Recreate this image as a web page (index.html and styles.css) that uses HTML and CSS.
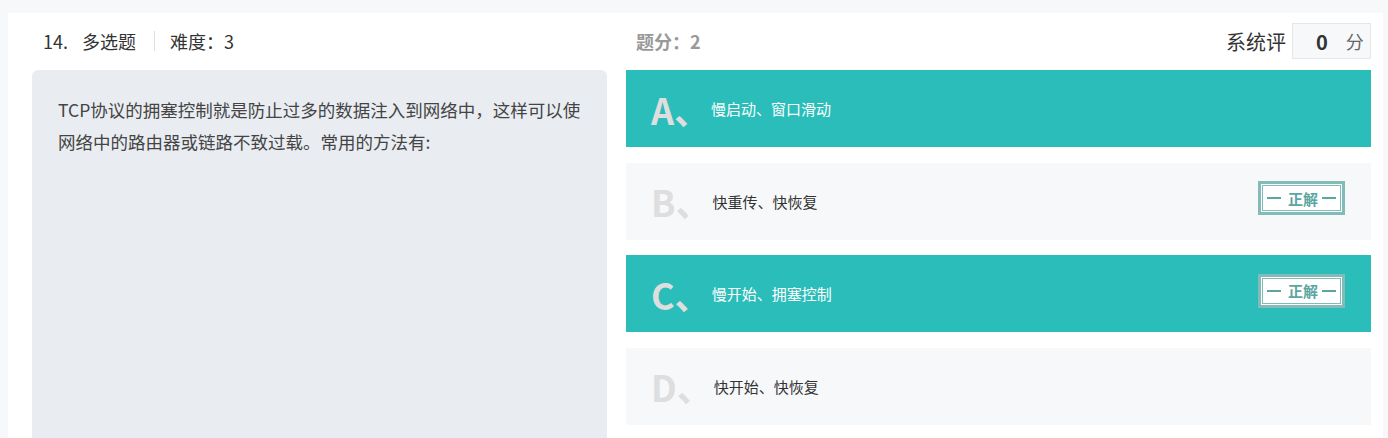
FILE: index.html
```html
<!DOCTYPE html>
<html lang="zh-CN">
<head>
<meta charset="utf-8">
<link rel="stylesheet" href="styles.css">
</head>
<body>
<div class="card">
  <div class="header">
    <div class="meta">
      <span class="num">14.</span>
      <span class="type">多选题</span>
      <span class="sep"></span>
      <span class="diff">难度：3</span>
    </div>
    <div class="meta-right">
      <span class="points">题分：2</span>
      <div class="score">
        <span class="score-label">系统评</span>
        <div class="score-box"><span class="score-val">0</span><span class="score-unit">分</span></div>
      </div>
    </div>
  </div>
  <div class="body">
    <div class="question">TCP协议的拥塞控制就是防止过多的数据注入到网络中，这样可以使网络中的路由器或链路不致过载。常用的方法有:</div>
    <div class="options">
      <div class="option selected">
        <span class="letter">A、</span><span class="text">慢启动、窗口滑动</span>
      </div>
      <div class="option">
        <span class="letter">B、</span><span class="text">快重传、快恢复</span>
        <span class="badge"><span class="badge-inner"><span class="dash dash-l"></span>正解<span class="dash dash-r"></span></span></span>
      </div>
      <div class="option selected">
        <span class="letter">C、</span><span class="text">慢开始、拥塞控制</span>
        <span class="badge"><span class="badge-inner"><span class="dash dash-l"></span>正解<span class="dash dash-r"></span></span></span>
      </div>
      <div class="option">
        <span class="letter">D、</span><span class="text">快开始、快恢复</span>
      </div>
    </div>
  </div>
</div>
</body>
</html>
```

FILE: styles.css
```css
html, body {
  margin: 0;
  height: 438px;
  overflow: hidden;
}
body {
  background: #f7f8fa;
  padding: 13px 5px 0 8px;
  box-sizing: border-box;
  font-family: "Noto Sans CJK SC", "Noto Sans", sans-serif;
  color: #333;
}
.card {
  background: #fff;
  height: 425px;
  padding: 0 12px 0 24px;
  box-sizing: border-box;
}
.header {
  display: grid;
  grid-template-columns: 575px 1fr;
  column-gap: 19px;
  height: 36px;
  padding-top: 10px;
  margin-bottom: 11px;
  align-items: center;
}
.meta {
  display: flex;
  align-items: center;
  padding-left: 11px;
  font-size: 18px;
  color: #333;
}
.num { margin-right: 14px; }
.sep {
  width: 1px;
  height: 20px;
  background: #e0e0e0;
  margin: 0 15px 0 18px;
}
.meta-right {
  display: flex;
  align-items: center;
  padding-left: 10px;
}
.points {
  font-size: 18px;
  font-weight: bold;
  color: #999;
}
.score {
  margin-left: auto;
  display: flex;
  align-items: center;
}
.score-label {
  font-size: 20px;
  color: #333;
  margin-right: 6px;
}
.score-box {
  width: 79px;
  height: 36px;
  box-sizing: border-box;
  border: 1px solid #e4e7ed;
  background: #f7f8fa;
  display: flex;
  align-items: center;
  padding-left: 23px;
}
.score-val {
  font-size: 20px;
  font-weight: bold;
  color: #333;
  margin-right: 18px;
}
.score-unit {
  font-size: 18px;
  color: #666;
}
.body {
  display: grid;
  grid-template-columns: 575px 1fr;
  column-gap: 19px;
  align-items: start;
}
.question {
  background: #e9edf2;
  border-radius: 6px 6px 0 0;
  height: 380px;
  box-sizing: border-box;
  padding: 24px 26px;
  font-size: 17.5px;
  line-height: 32px;
  color: #444;
}
.options {
  display: flex;
  flex-direction: column;
  gap: 15.67px;
}
.option {
  height: 77px;
  background: #f7f8fa;
  display: flex;
  align-items: center;
  padding: 0 26px 0 25px;
  box-sizing: border-box;
}
.option.selected {
  background: #2abdb9;
}
.letter {
  font-size: 36px;
  font-weight: bold;
  color: #dedede;
  line-height: 40px;
  margin-right: 1px;
}
.text {
  font-size: 15px;
  color: #333;
}
.option.selected .text {
  color: #fff;
}
.badge {
  margin-left: auto;
  margin-bottom: 6px;
  border: 3px solid #82bbb7;
  background: #fff;
  padding: 1px;
}
.badge-inner {
  display: flex;
  align-items: center;
  border: 1px solid #82bbb7;
  height: 24px;
  padding: 0 4px;
  font-size: 15px;
  font-weight: bold;
  color: #5ca6a1;
  white-space: nowrap;
}
.dash {
  display: inline-block;
  width: 14px;
  height: 1.5px;
  background: #5ca6a1;
}
.dash-l { margin-right: 7px; }
.dash-r { margin-left: 4px; }
```
